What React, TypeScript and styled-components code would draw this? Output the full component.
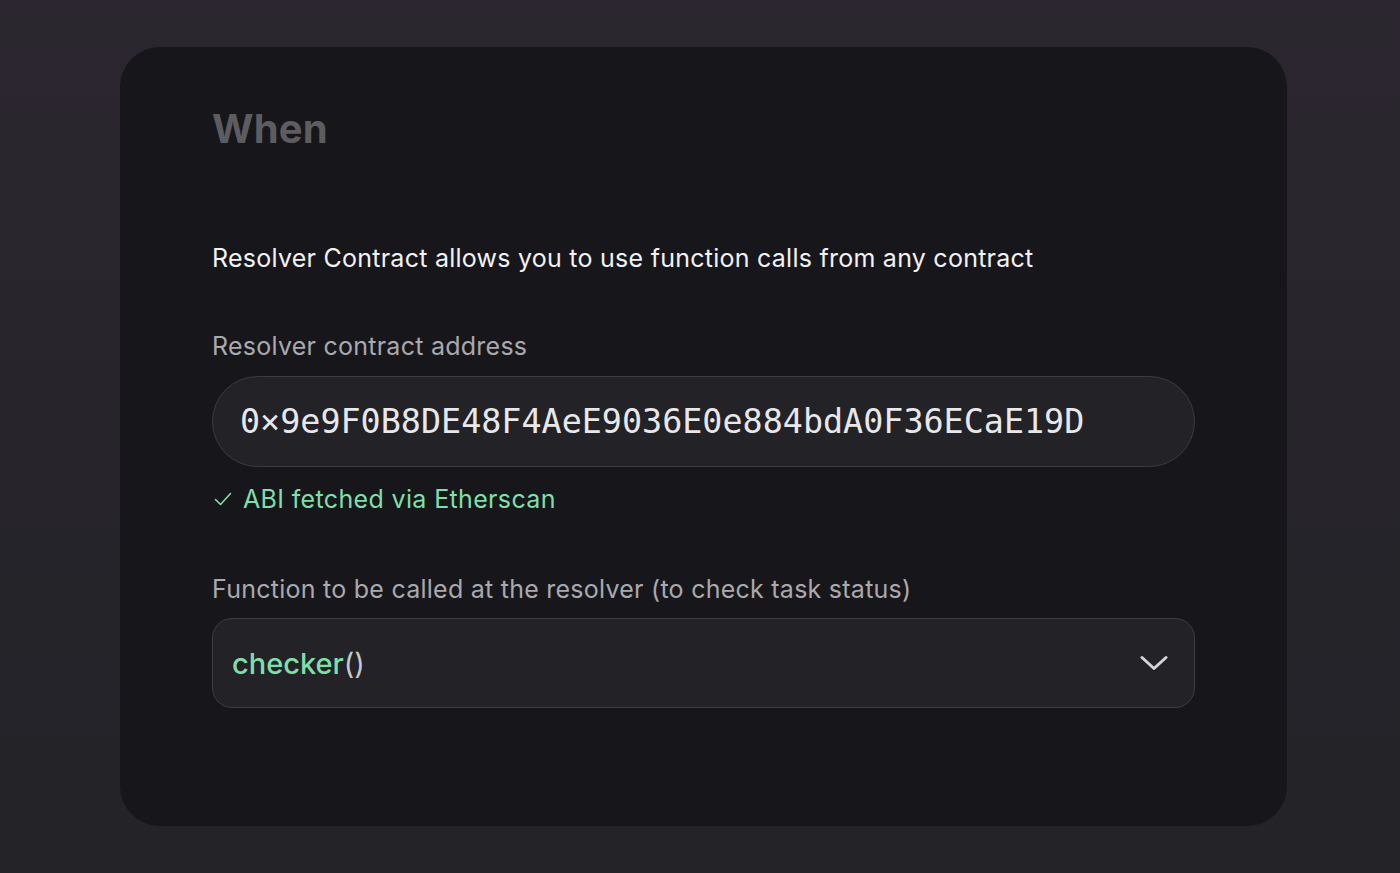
import React from "react";
import styled, { createGlobalStyle } from "styled-components";

const Global = createGlobalStyle`
  html, body { margin: 0; padding: 0; }
  body {
    background: linear-gradient(180deg, #2b262f 0%, #27252b 45%, #232328 100%);
    min-height: 873px;
    font-family: Inter, "Noto Sans", sans-serif;
    overflow: hidden;
  }
`;

const Page = styled.div`
  height: 873px;
  padding: 47px 113px 0 120px;
  box-sizing: border-box;
`;

const Card = styled.section`
  width: 1167px;
  height: 779px;
  background: #17171b;
  border-radius: 40px;
  box-sizing: border-box;
  padding: 58px 92px 0 92px;
  display: flex;
  flex-direction: column;
`;

const Title = styled.h2`
  margin: 0;
  font-size: 40px;
  line-height: 48px;
  font-weight: 700;
  color: #5d5d61;
  letter-spacing: 0.2px;
`;

const Intro = styled.p`
  margin: 89px 0 0 0;
  font-size: 25px;
  line-height: 32px;
  color: #f2f2f4;
  letter-spacing: 0.25px;
`;

const Label = styled.label<{ $top: number }>`
  display: block;
  margin-top: ${(p) => p.$top}px;
  font-size: 25px;
  line-height: 32px;
  color: #a9a9ae;
  letter-spacing: 0.25px;
`;

const AddressInput = styled.div`
  margin-top: 14px;
  width: 983px;
  height: 91px;
  box-sizing: border-box;
  border: 1.5px solid #3b3b41;
  border-radius: 46px;
  background: #222227;
  display: flex;
  align-items: center;
  padding-left: 27px;
  font-family: "DejaVu Sans Mono", "Liberation Mono", monospace;
  font-size: 33.4px;
  color: #e8e8eb;
`;

const Status = styled.div`
  margin-top: 16px;
  display: flex;
  align-items: center;
  gap: 11px;
  padding-left: 2px;
  font-size: 25px;
  line-height: 32px;
  color: #7fdfaa;
  letter-spacing: 0.35px;
`;

const Select = styled.div`
  margin-top: 13px;
  width: 983px;
  height: 90px;
  box-sizing: border-box;
  border: 1.5px solid #3d3d44;
  border-radius: 20px;
  background: #222227;
  display: flex;
  align-items: center;
  justify-content: space-between;
  padding: 0 26px 0 19px;
`;

const FnName = styled.span`
  font-size: 29px;
  font-weight: 500;
  color: #7fdfaa;
`;

const Parens = styled.span`
  font-size: 29px;
  font-weight: 400;
  color: #c8c8cd;
`;

export default function App() {
  return (
    <>
      <Global />
      <Page>
        <Card>
          <Title>When</Title>
          <Intro>Resolver Contract allows you to use function calls from any contract</Intro>
          <Label $top={56}>Resolver contract address</Label>
          <AddressInput>0×9e9F0B8DE48F4AeE9036E0e884bdA0F36ECaE19D</AddressInput>
          <Status>
            <svg width="18" height="14" viewBox="0 0 18 14" fill="none" stroke="#7fdfaa" strokeWidth="1.6" strokeLinecap="round" strokeLinejoin="round">
              <path d="M1.5 7.5l5 5L16.5 1.5" />
            </svg>
            ABI fetched via Etherscan
          </Status>
          <Label $top={58}>Function to be called at the resolver (to check task status)</Label>
          <Select>
            <span>
              <FnName>checker</FnName>
              <Parens>()</Parens>
            </span>
            <svg width="28" height="16" viewBox="0 0 28 16" fill="none" stroke="#d4d4d8" strokeWidth="3" strokeLinecap="round" strokeLinejoin="round">
              <path d="M2 2.5l12 11 12-11" />
            </svg>
          </Select>
        </Card>
      </Page>
    </>
  );
}
